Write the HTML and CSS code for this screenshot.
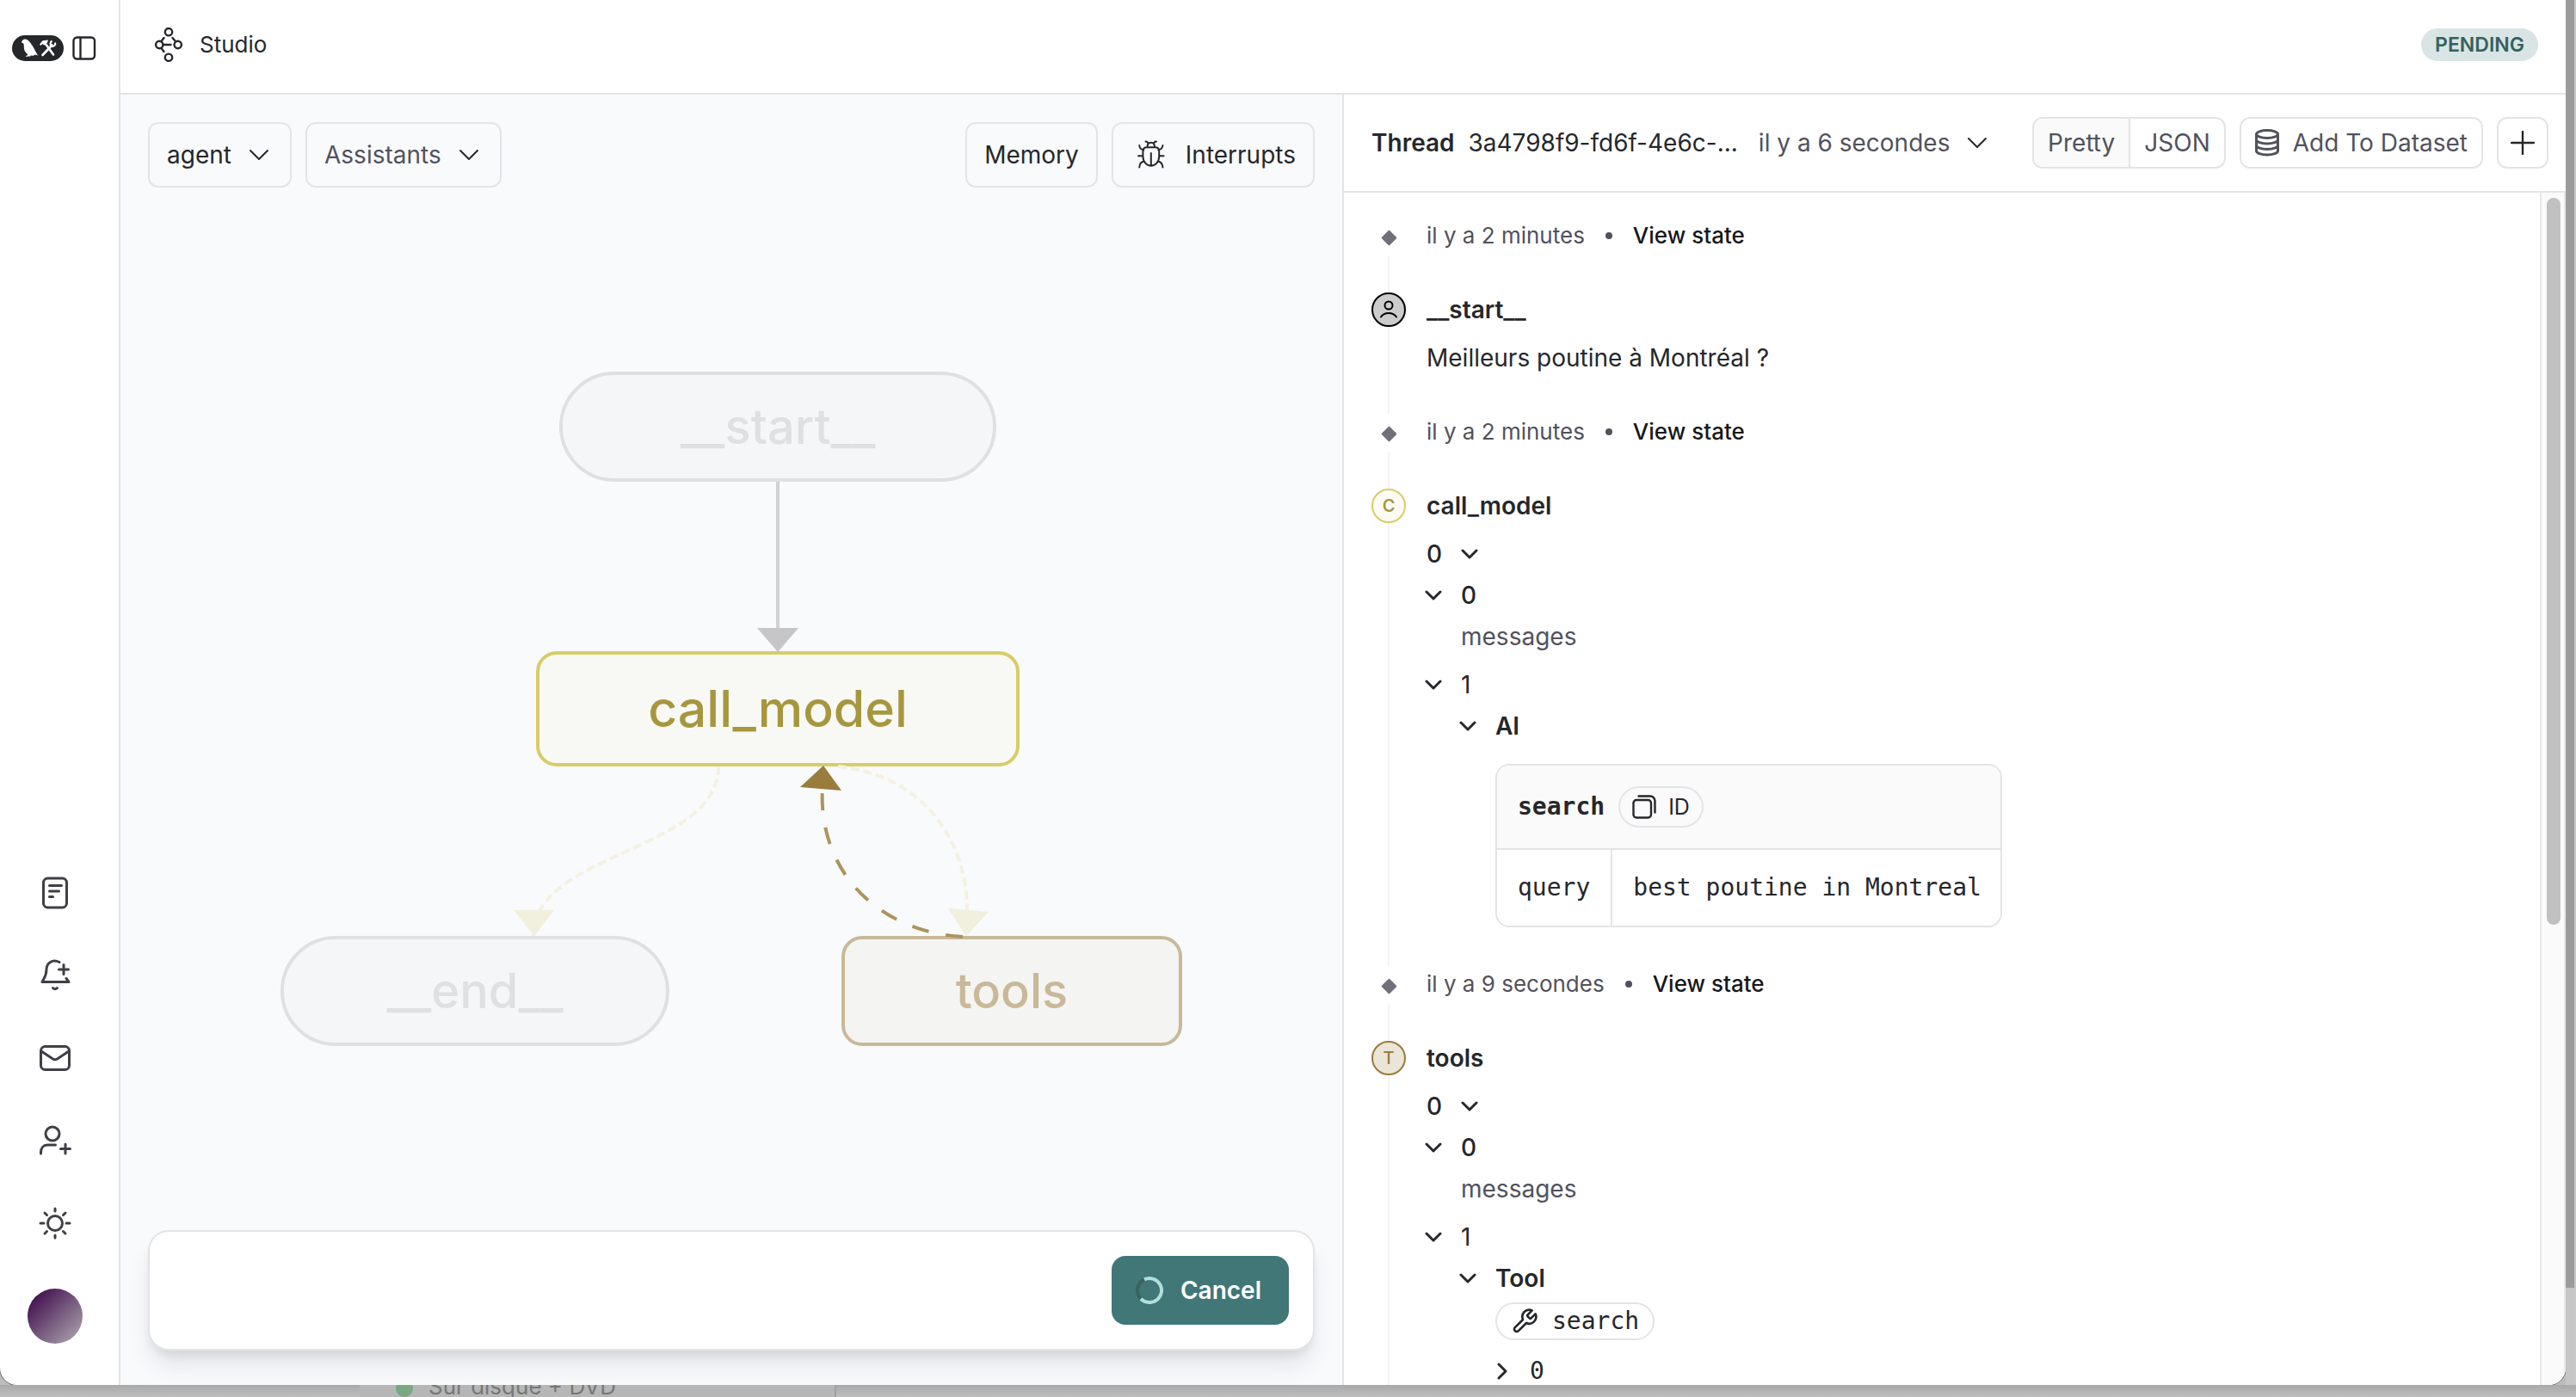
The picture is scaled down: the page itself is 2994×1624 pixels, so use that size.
FILE: index.html
```html
<!DOCTYPE html>
<html lang="fr">
<head>
<meta charset="utf-8">
<title>Studio</title>
<link rel="stylesheet" href="styles.css">
</head>
<body>
<svg class="sprite" aria-hidden="true">
  <symbol id="chevron" viewBox="0 0 24 14"><path d="M2 2l10 10L22 2" fill="none" stroke="currentColor" stroke-width="2" stroke-linecap="round" stroke-linejoin="round"/></symbol>
  <symbol id="caret" viewBox="0 0 20 20"><path d="M2 6l8 8 8-8" fill="none" stroke="currentColor" stroke-width="3" stroke-linecap="round" stroke-linejoin="round"/></symbol>
</svg>

<div class="desktop">
  <div class="window">
    <nav class="sidebar" aria-label="Navigation">
      <div class="sidebar-top">
        <a class="logo" href="#" aria-label="Accueil">
          <svg viewBox="0 0 60 30" width="60" height="30">
            <path fill="#fff" d="M11 8.500C11.500 5.500 14 4 16.500 4.800C19.500 5.600 20.500 8 22.500 10.500C25 13.500 26.500 18 30 23.600L26.500 22.600L25 23.800L21.500 23.400L21.300 24.600L18.500 24.400L17.500 25L15.500 24.300L18.500 23L17.500 21.500C14.800 19.500 13.600 16.500 13.800 13C13.800 11.500 13.800 10.500 13.200 9.400Z"/>
            <g stroke="#fff" stroke-width="2.600" stroke-linecap="round" fill="none">
              <path d="M39 10L48 22.500"/>
              <path d="M46.500 11.500L35.500 23"/>
            </g>
            <path fill="#fff" d="M32 10.500L35.500 6.200L42 5.600L41 8.500L38 11.800L35.500 10L33.500 12Z"/>
            <path d="M46.500 6.500C44 8 44 11.500 46 12.500C48.500 13.500 51 11.500 50 8.500" fill="none" stroke="#fff" stroke-width="2.200"/>
          </svg>
        </a>
        <button class="icon-btn small" aria-label="Replier le menu">
          <svg viewBox="0 0 28 28" width="28" height="28" fill="none" stroke="currentColor" stroke-width="2.400"><rect x="1.500" y="1.500" width="24.500" height="25" rx="4"/><path d="M9.500 1.500v25"/></svg>
        </button>
      </div>
      <div class="sidebar-bottom">
        <button class="icon-btn" aria-label="Documentation">
          <svg viewBox="0 0 40 40" width="40" height="40"><rect x="6.500" y="3" width="27" height="34" rx="5"/><path d="M13.500 11.500h14M13.500 18h11M13.500 24.500h4"/></svg>
        </button>
        <button class="icon-btn" aria-label="Notifications">
          <svg viewBox="0 0 40 40" width="40" height="40"><path d="M25 4.500C17 .500 10 5.500 10 13c0 7.500-3 10.500-5 14.500h31l-3-4M30 7.500v11M24.500 13h11M17.500 34.500c1.500 1.500 3.500 1.500 5 0"/></svg>
        </button>
        <button class="icon-btn" aria-label="Messages">
          <svg viewBox="0 0 40 40" width="40" height="40"><rect x="3.500" y="6.500" width="33" height="27" rx="5"/><path d="M4 12l13.500 9c2 1.200 3 1.200 5 0L36 12"/></svg>
        </button>
        <button class="icon-btn" aria-label="Inviter">
          <svg viewBox="0 0 40 40" width="40" height="40"><circle cx="17" cy="12" r="8"/><path d="M3.500 35v-1.500c0-5 3-8.500 7.500-8.500h9.500M32 24v11M26.500 29.500h11"/></svg>
        </button>
        <button class="icon-btn" aria-label="Theme">
          <svg viewBox="0 0 40 40" width="40" height="40"><circle cx="20" cy="20" r="8.500"/><path d="M20 3v3M20 34v3M3 20h4M33 20h4M8 8l2.500 2.500M29.500 29.500L32 32M8 32l2.500-2.500M29.500 10.500L32 8"/></svg>
        </button>
        <button class="avatar" aria-label="Compte"></button>
      </div>
    </nav>

    <div class="main">
      <header class="topbar">
        <h1 class="title">
          <svg viewBox="0 0 32 40" width="32" height="40" fill="none" stroke="currentColor" stroke-width="2.400" stroke-linecap="round"><circle cx="16" cy="5.200" r="4.200"/><circle cx="5.300" cy="20" r="4.200"/><circle cx="26.700" cy="20" r="4.200"/><circle cx="16" cy="34.800" r="4.200"/><path d="M9.500 20h9M7.500 16l3-4M7.500 24l3 4M20.500 12l3.500 4"/></svg>
          Studio
        </h1>
        <span class="badge">PENDING</span>
      </header>

      <div class="panes">
        <section class="canvas" aria-label="Graphe">
          <div class="toolbar">
            <label class="picker">
              <select aria-label="Graphe"><option>agent</option></select>
              <svg class="chevron"><use href="#chevron"/></svg>
            </label>
            <label class="picker muted">
              <select aria-label="Assistants"><option>Assistants</option></select>
              <svg class="chevron"><use href="#chevron"/></svg>
            </label>
            <button class="btn push">Memory</button>
            <button class="btn with-bug">
              <svg viewBox="0 0 32 34" width="32" height="34" fill="none" stroke="currentColor" stroke-width="2" stroke-linecap="round"><path d="M11.500 8C11.500 4.500 13 2.700 15.800 2.700S20 4.500 20 8M12.500 4C12.300 2.300 11 1.600 9.500 1.500M19 4c.2-1.700 1.500-2.400 3-2.500M11 8.200h9.600c3 0 4.600 2 4.600 4.500v6c0 6.500-4.500 11-9.400 11s-9.400-4.500-9.400-11v-6c0-2.500 1.600-4.500 4.600-4.500zM15.800 15v14.500M1 18.300h5.400M25.200 18.300h5.400M2.200 6c.3 3 2.300 5 5 5.500M29.400 6c-.3 3-2.300 5-5 5.500M2.200 31.500c.2-3.400 2.200-6.300 5.300-7M29.400 31.500c-.2-3.400-2.200-6.300-5.300-7"/></svg>
              Interrupts
            </button>
          </div>

          <div class="stage">
            <div class="graph">
              <div class="node node-start">__start__</div>
              <div class="node node-call">call_model</div>
              <div class="node node-end">__end__</div>
              <div class="node node-tools">tools</div>
              <svg class="edges" viewBox="326 432 1048 784" fill="none" stroke-width="4">
                <path d="M904 560V732" stroke="#d0d1d3"/>
                <path d="M880 730h48l-24 28z" fill="#c6c6c9"/>
                <path d="M835 891C835 990 620 990 620 1088" stroke="#f4f1e1" stroke-dasharray="10 5"/>
                <path d="M597 1058h47l-23 30z" fill="#f1efdd"/>
                <path d="M974 891C1066 900 1124 970 1124 1058" stroke="#f4f1e1" stroke-dasharray="10 5"/>
                <path d="M1102 1056l47 4l-26 28z" fill="#f1efdd"/>
                <path d="M1119 1089C1018 1083 950 1010 956 915" stroke="#ad935e" stroke-dasharray="20 20"/>
                <path d="M930 915l48 4l-21-29z" fill="#9a7c3c"/>
              </svg>
            </div>
          </div>

          <div class="composer">
            <button class="cancel">
              <svg viewBox="0 0 32 32" width="32" height="32" fill="none" stroke-width="4"><circle cx="16" cy="16" r="14" stroke="#366463"/><path d="M10 3.400A14 14 0 1 1 6 25.800" stroke="#b2dfdb"/></svg>
              Cancel
            </button>
          </div>
        </section>

        <section class="thread" aria-label="Thread">
          <div class="thread-head">
            <button class="thread-picker">
              <strong>Thread</strong>
              <span>3a4798f9-fd6f-4e6c-...</span>
              <span class="ago">il y a 6 secondes</span>
              <svg class="chevron"><use href="#chevron"/></svg>
            </button>
            <div class="segmented">
              <button aria-pressed="true">Pretty</button>
              <button aria-pressed="false">JSON</button>
            </div>
            <button class="btn-sm">
              <svg viewBox="0 0 28 32" width="28" height="32" fill="none" stroke="currentColor" stroke-width="3"><ellipse cx="14" cy="6" rx="12.500" ry="4.500"/><path d="M1.500 6v19.500c0 2.500 5.600 4.500 12.500 4.500s12.500-2 12.500-4.500V6M1.500 12.500c0 2.500 5.600 4.500 12.500 4.500s12.500-2 12.500-4.500M1.500 19c0 2.500 5.600 4.500 12.500 4.500s12.500-2 12.500-4.500"/></svg>
              Add To Dataset
            </button>
            <button class="btn-sm square" aria-label="Nouveau thread">
              <svg viewBox="0 0 28 28" width="28" height="28" fill="none" stroke="currentColor" stroke-width="2.400" stroke-linecap="round"><path d="M14 1v26M1 14h26"/></svg>
            </button>
          </div>

          <div class="thread-body">
            <ol class="timeline">
              <li class="item">
                <div class="rail"><i class="diamond"></i></div>
                <div class="state">il y a 2 minutes <i class="dot"></i> <a href="#">View state</a></div>
              </li>
              <li class="item">
                <div class="rail">
                  <span class="mark mark-start"><svg viewBox="0 0 24 24" width="24" height="24" fill="none" stroke="currentColor" stroke-width="2" stroke-linecap="round"><circle cx="12" cy="7" r="4.500"/><path d="M3 20.500c4-6 14-6 18 0"/></svg></span>
                </div>
                <div class="step">
                  <h2>__start__</h2>
                  <p class="message">Meilleurs poutine à Montréal ?</p>
                </div>
              </li>
              <li class="item">
                <div class="rail"><i class="diamond"></i></div>
                <div class="state">il y a 2 minutes <i class="dot"></i> <a href="#">View state</a></div>
              </li>
              <li class="item">
                <div class="rail"><span class="mark mark-call">C</span></div>
                <div class="step">
                  <h2>call_model</h2>
                  <div class="tree">
                    <button class="row after">0 <svg class="caret"><use href="#caret"/></svg></button>
                    <button class="row"><svg class="caret"><use href="#caret"/></svg> 0</button>
                    <div class="row label">messages</div>
                    <button class="row light"><svg class="caret"><use href="#caret"/></svg> 1</button>
                    <div class="nest">
                      <button class="row kind"><svg class="caret"><use href="#caret"/></svg> AI</button>
                      <table class="call">
                        <thead>
                          <tr><th colspan="2"><span class="call-head">search
                            <button class="chip"><svg viewBox="0 0 28 28" width="28" height="28" fill="none" stroke="currentColor" stroke-width="2.400" stroke-linecap="round"><rect x="1.500" y="6" width="20.500" height="20.500" rx="3.500"/><path d="M7.500 1.500H21c3 0 5.500 2.500 5.500 5.500v13.500"/></svg>ID</button></span></th></tr>
                        </thead>
                        <tbody>
                          <tr><td>query</td><td>best poutine in Montreal</td></tr>
                        </tbody>
                      </table>
                    </div>
                  </div>
                </div>
              </li>
              <li class="item">
                <div class="rail"><i class="diamond"></i></div>
                <div class="state">il y a 9 secondes <i class="dot"></i> <a href="#">View state</a></div>
              </li>
              <li class="item">
                <div class="rail"><span class="mark mark-tools">T</span></div>
                <div class="step">
                  <h2>tools</h2>
                  <div class="tree">
                    <button class="row after">0 <svg class="caret"><use href="#caret"/></svg></button>
                    <button class="row"><svg class="caret"><use href="#caret"/></svg> 0</button>
                    <div class="row label">messages</div>
                    <button class="row light"><svg class="caret"><use href="#caret"/></svg> 1</button>
                    <div class="nest">
                      <button class="row kind"><svg class="caret"><use href="#caret"/></svg> Tool</button>
                      <div class="nest">
                        <span class="tool-chip"><svg viewBox="0 0 24 24" width="32" height="32" fill="none" stroke="currentColor" stroke-width="2" stroke-linejoin="round"><path d="M14.700 6.300a1 1 0 0 0 0 1.400l1.600 1.600a1 1 0 0 0 1.400 0l3.770-3.770a6 6 0 0 1-7.940 7.940l-6.910 6.910a2.120 2.120 0 0 1-3-3l6.910-6.910a6 6 0 0 1 7.940-7.940l-3.760 3.760z"/></svg>search</span>
                        <button class="row code"><svg class="caret closed"><use href="#caret"/></svg> 0</button>
                      </div>
                    </div>
                  </div>
                </div>
              </li>
            </ol>
            <div class="scrollbar" aria-hidden="true"><div class="thumb"></div></div>
          </div>
        </section>
      </div>
    </div>
  </div>

  <div class="edge-right"></div>
  <div class="edge-bottom">
    <div class="behind"><i class="green"></i>Sur disque + DVD</div>
  </div>
</div>
</body>
</html>
```

FILE: styles.css
```css
* { box-sizing: border-box; }

:root {
  --line: #e4e4e7;
  --ink: #26272b;
  --muted: #51525c;
  --mono: "DejaVu Sans Mono", "Liberation Mono", monospace;
}

body {
  margin: 0;
  font: 400 28px/40px Inter, "Liberation Sans", sans-serif;
  font-optical-sizing: none;
  color: var(--ink);
  background: #b4b4b4;
}

button, select {
  margin: 0;
  padding: 0;
  border: 0;
  background: none;
  font: inherit;
  font-optical-sizing: none;
  color: inherit;
}

h1, h2, p, ol { margin: 0; padding: 0; font: inherit; }
ol { list-style: none; }
svg { flex: none; }
.sprite { position: absolute; width: 0; height: 0; }

/* Desktop around the window */
.desktop {
  display: grid;
  grid-template: minmax(0, 1fr) 14px / minmax(0, 1fr) 12px;
  height: 100vh;
  overflow: hidden;
  background: #bdbdbd;
}

.edge-right {
  background: linear-gradient(#9c9c9c 0 93%, #c6c6c6 93%);
  border-right: 2px solid #c8c8c8;
}

.edge-bottom {
  grid-column: 1 / 3;
  display: flex;
  overflow: hidden;
  background: linear-gradient(#a9a9a9, #bebebe);
}

.behind {
  display: flex;
  align-items: flex-end;
  gap: 18px;
  width: 554px;
  margin-left: 418px;
  padding-left: 42px;
  background: #b6b6b6;
  border-right: 2px solid #a0a0a0;
  font-size: 26px;
  line-height: 24px;
  color: #777;
}

.green { width: 20px; height: 20px; border-radius: 50%; background: #79a883; }

.window {
  display: flex;
  overflow: hidden;
  background: #fff;
  border-radius: 0 0 20px 20px;
  box-shadow: 0 0 0 1px #707070;
}

/* Sidebar */
.sidebar {
  display: flex;
  flex-direction: column;
  justify-content: space-between;
  width: 140px;
  padding: 41px 10px 48px 0;
  border-right: 2px solid var(--line);
}

.sidebar-top { display: flex; align-items: center; gap: 10px; padding-left: 14px; }

.logo {
  display: flex;
  border-radius: 15px;
  background: var(--ink);
}

.sidebar-bottom { display: flex; flex-direction: column; align-items: center; gap: 56px; }

.icon-btn { display: flex; color: #3f3f46; }
.icon-btn.small { color: var(--ink); }

.sidebar-bottom .icon-btn svg {
  fill: none;
  stroke: currentColor;
  stroke-width: 3;
  stroke-linecap: round;
  stroke-linejoin: round;
}

.avatar {
  width: 64px;
  height: 64px;
  border-radius: 50%;
  background: linear-gradient(135deg, #43114f 12%, #a89fab 92%);
}

/* Top bar */
.main { display: flex; flex: 1; flex-direction: column; min-width: 0; }

.topbar {
  display: flex;
  flex: none;
  align-items: center;
  justify-content: space-between;
  height: 110px;
  padding: 0 32px 4px 40px;
  border-bottom: 2px solid var(--line);
}

.title { display: flex; align-items: center; gap: 20px; font-size: 26px; }

.badge {
  padding: 0 16px;
  border-radius: 19px;
  background: #d9e5e4;
  font-size: 23px;
  font-weight: 600;
  line-height: 38px;
  color: #34615f;
}

.panes {
  display: grid;
  flex: 1;
  grid-template-columns: 710fr 711fr;
  min-height: 0;
}

/* Graph canvas */
.canvas {
  display: flex;
  flex-direction: column;
  padding: 32px 32px 40px;
  background: #f9fafc;
}

.toolbar { display: flex; gap: 16px; }
.push { margin-left: auto; }

.btn, .picker {
  display: flex;
  align-items: center;
  height: 76px;
  padding: 0 20px;
  border: 2px solid var(--line);
  border-radius: 12px;
}

.with-bug { gap: 24px; padding-left: 28px; }
.picker select { appearance: none; }
.picker { gap: 20px; padding-right: 24px; }
.picker.muted select { color: var(--muted); }
.chevron { width: 24px; height: 14px; color: var(--ink); }

.stage { display: grid; flex: 1; place-items: center; }
.graph { position: relative; width: 1048px; height: 784px; }
.edges { position: absolute; inset: 0; }

.node {
  position: absolute;
  display: grid;
  place-items: center;
  height: 128px;
  border: 4px solid;
  font-size: 56px;
  font-weight: 500;
}

.node-start { left: 324px; top: 0; width: 508px; border-radius: 64px; background: #f5f6f8; color: #dfe0e2; }
.node-end { left: 0; top: 656px; width: 452px; border-radius: 64px; background: #f5f6f8; color: #dfe0e2; }
.node-tools { left: 652px; top: 656px; width: 396px; border-radius: 24px; background: #f4f4f2; color: #c9b999; }
.node-call {
  left: 297px;
  top: 325px;
  width: 562px;
  height: 134px;
  border-color: #d9cc68;
  border-radius: 24px;
  background: #f8f9f4;
  font-size: 59px;
  color: #a6973f;
}

.composer {
  display: flex;
  justify-content: flex-end;
  padding: 28px;
  border: 2px solid var(--line);
  border-radius: 24px;
  background: #fff;
  box-shadow: 0 20px 30px -6px rgb(16 24 40 / 12%), 0 8px 12px -4px rgb(16 24 40 / 8%);
}

.cancel {
  display: flex;
  align-items: center;
  gap: 20px;
  height: 80px;
  padding: 0 32px 0 28px;
  border-radius: 16px;
  background: #417776;
  font-weight: 600;
  color: #fff;
}

/* Thread pane */
.thread {
  display: flex;
  flex-direction: column;
  min-width: 0;
  min-height: 0;
  border-left: 2px solid var(--line);
}

.thread-head {
  display: flex;
  flex: none;
  align-items: center;
  gap: 16px;
  height: 114px;
  padding: 0 20px 0 32px;
  border-bottom: 2px solid var(--line);
}

.thread-picker { display: flex; align-items: center; gap: 16px; margin-right: auto; white-space: nowrap; }
.thread-picker strong { font-weight: 600; }
.ago { margin-left: 8px; color: var(--muted); }
.thread-picker .chevron { margin-left: 4px; }

.segmented {
  display: flex;
  height: 60px;
  overflow: hidden;
  border: 2px solid var(--line);
  border-radius: 12px;
  color: var(--muted);
}

.segmented button { padding: 0 16px; }
.segmented [aria-pressed="true"] { border-right: 2px solid var(--line); background: #fafafa; }

.btn-sm {
  display: flex;
  align-items: center;
  justify-content: center;
  gap: 16px;
  height: 60px;
  padding: 0 16px;
  border: 2px solid var(--line);
  border-radius: 12px;
  white-space: nowrap;
  color: var(--muted);
}

.square { width: 60px; padding: 0; color: var(--ink); }

.thread-body { display: flex; flex: 1; min-height: 0; overflow: hidden; }
.timeline { flex: 1; padding: 30px 32px 0; }

.scrollbar {
  flex: none;
  width: 30px;
  padding: 6px;
  border: solid #e8e8e8;
  border-width: 0 2px;
  background: #fafafa;
}

.thumb { width: 16px; height: 61.5%; border-radius: 8px; background: #c1c1c1; }

.item { display: grid; grid-template-columns: 40px 1fr; gap: 24px; }

.rail { display: flex; flex-direction: column; align-items: center; }
.rail::after { content: ""; flex: 1; width: 2px; background: #f4f4f5; }

.diamond { display: grid; place-items: center; height: 44px; }
.diamond::before { content: ""; width: 13px; height: 13px; border-radius: 1px; background: #70707b; transform: rotate(45deg); }

.mark {
  display: grid;
  flex: none;
  place-items: center;
  width: 40px;
  height: 40px;
  border: 2px solid;
  border-radius: 50%;
  font-size: 20px;
  font-weight: 500;
  line-height: 20px;
}

.mark-start { background: #ccc; border-color: #000; color: #000; }
.mark-call { border-color: #d9cc68; background: #fdfbf4; font-weight: 600; color: #a6973f; }
.mark-tools { background: #ebe5d8; color: #9a7c3c; }

.state {
  display: flex;
  align-items: center;
  gap: 24px;
  height: 86px;
  padding-bottom: 46px;
  font-size: 26px;
  color: var(--muted);
}

.state a { font-weight: 500; color: #18181b; text-decoration: none; }
.dot { width: 8px; height: 8px; border-radius: 50%; background: currentColor; }

.step { padding-bottom: 42px; }
.step h2 { margin-bottom: 12px; font-weight: 600; }
.message { line-height: 48px; }

/* State tree */
.row { display: flex; align-items: center; gap: 22px; height: 48px; margin-left: -2px; font-weight: 500; }
.row.after { margin-left: 0; }
.caret { width: 20px; height: 20px; }
.row.label { margin-bottom: 8px; padding-left: 42px; font-weight: 400; color: var(--muted); }
.row.light { font-weight: 400; }
.row.kind { font-weight: 600; }
.row.code { font-family: var(--mono); font-weight: 400; }
.caret.closed { transform: rotate(-90deg); }
.nest { padding-left: 40px; }

.call {
  margin: 20px 0 4px 40px;
  border: 2px solid var(--line);
  border-spacing: 0;
  border-radius: 16px;
  font-family: var(--mono);
  overflow: hidden;
}

.call th { padding: 0 24px; height: 96px; background: #fafafa; }
.call-head { display: flex; align-items: center; gap: 16px; }
.call td { height: 90px; padding: 0 24px; border-top: 2px solid var(--line); }
.call td + td { padding-right: 22px; border-left: 2px solid var(--line); }

.chip {
  display: flex;
  align-items: center;
  gap: 14px;
  height: 48px;
  padding: 0 14px;
  border: 2px solid var(--line);
  border-radius: 24px;
  font-family: Inter, "Liberation Sans", sans-serif;
  font-size: 25px;
  font-weight: 400;
}

.tool-chip {
  display: flex;
  align-items: center;
  gap: 16px;
  width: max-content;
  height: 44px;
  margin: 4px 0 12px;
  padding: 0 16px;
  border: 2px solid var(--line);
  border-radius: 22px;
  font-family: var(--mono);
}
```
